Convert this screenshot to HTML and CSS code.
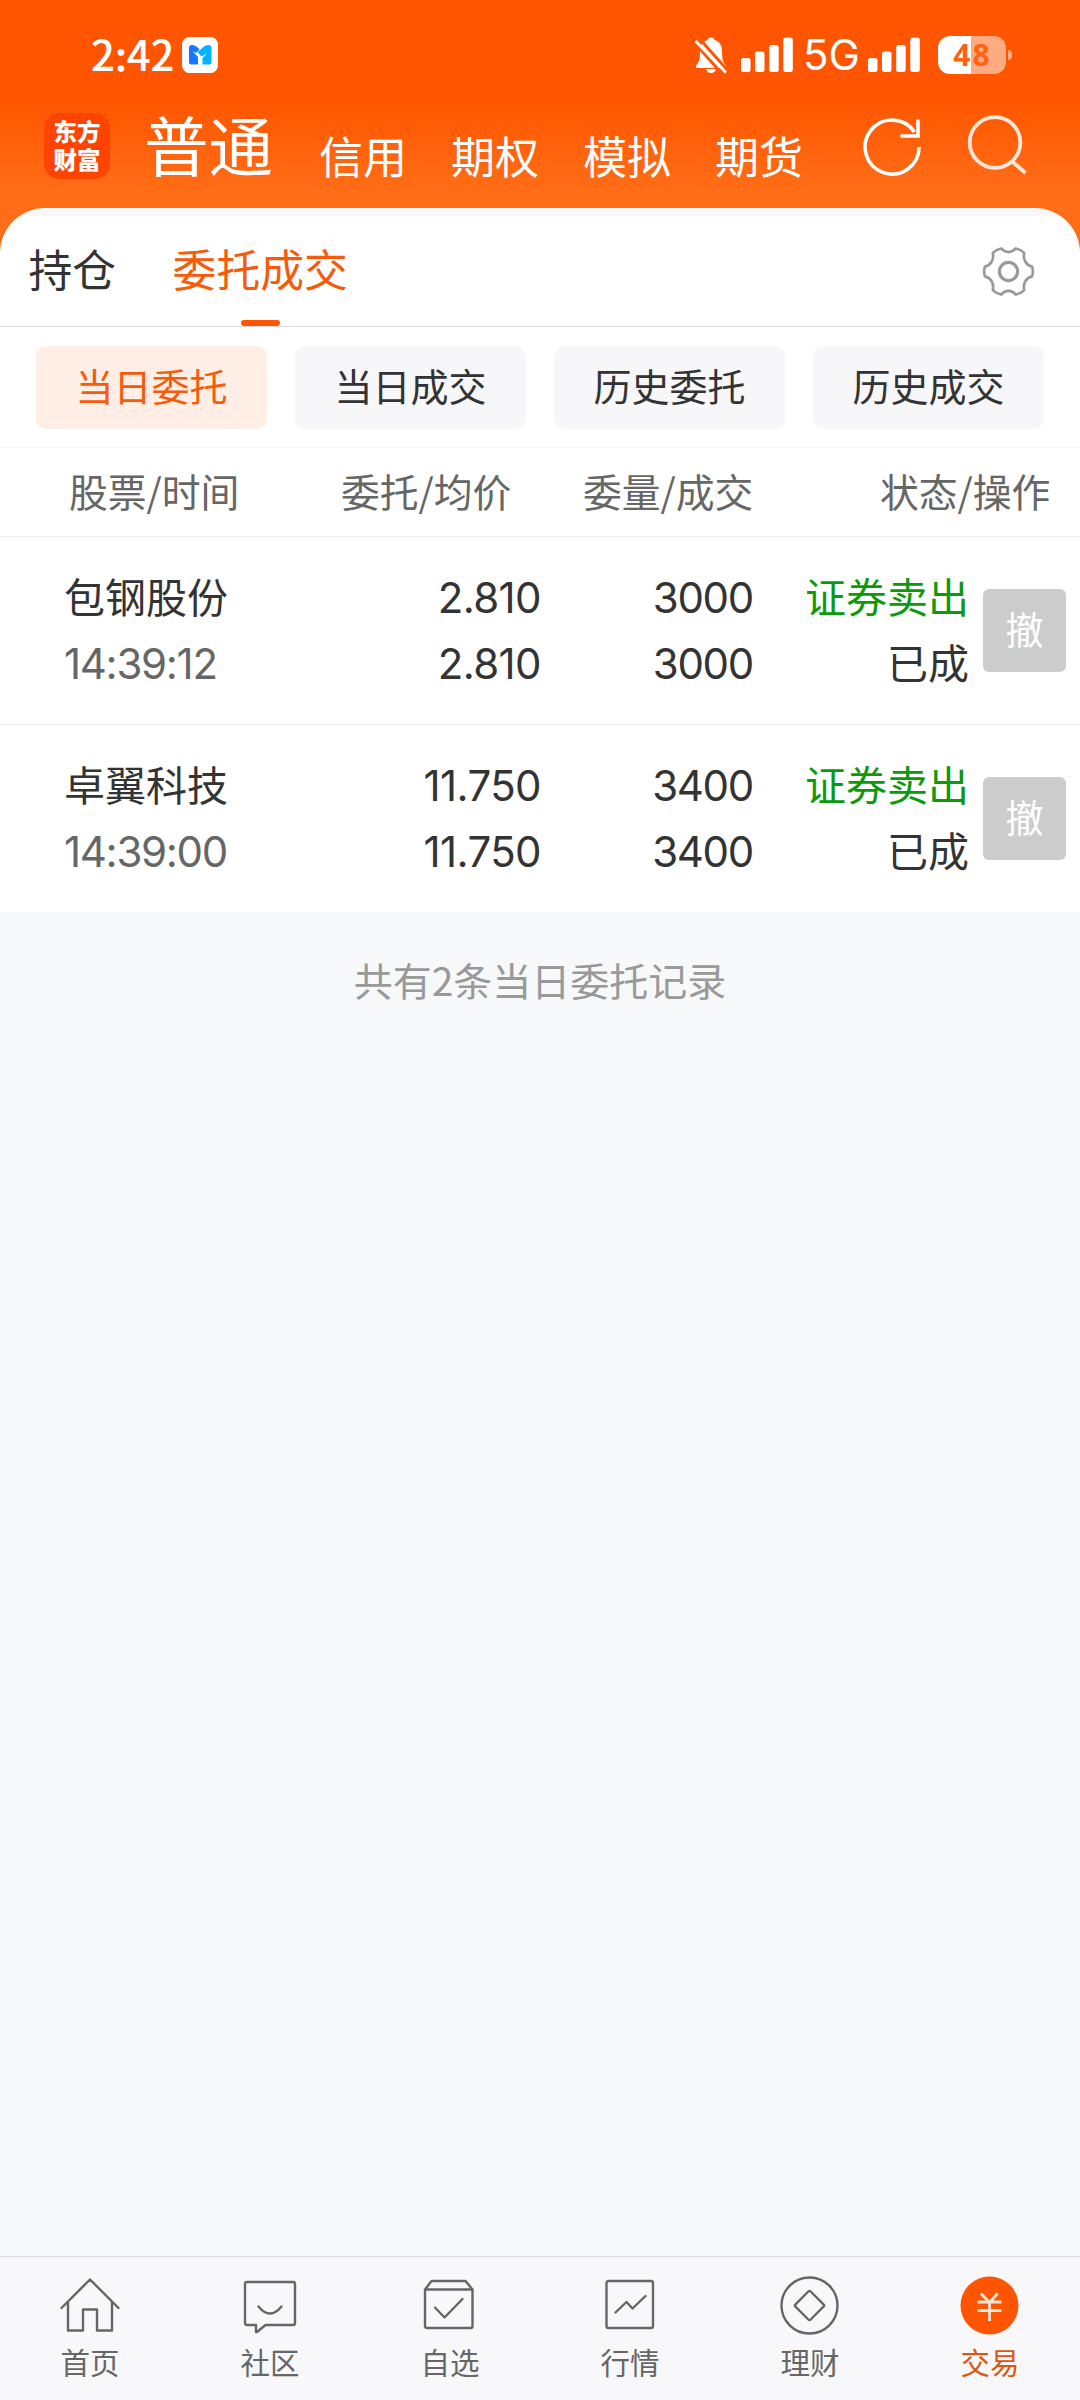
FILE: index.html
```html
<!DOCTYPE html>
<html lang="zh-CN">
<head>
<meta charset="utf-8">
<title>委托成交</title>
<link rel="stylesheet" href="styles.css">
</head>
<body>
<div class="app">
  <header class="header">
    <div class="status">
      <span class="clock">2:42</span>
      <svg class="app-badge" width="36" height="36" viewBox="0 0 36 36">
        <rect width="36" height="36" rx="7.5" fill="#fff"/>
        <path d="M7 11q0-3 3-3 4 0 7.500 4.500l-3.500 3.500-3.500-2 5.500 6v7.500H9.500q-2.500 0-2.500-2.500z" fill="#1677ff"/>
        <path d="M15.500 15 22 9.500q1.500-1.500 4-1.500 3.500 0 3.500 2.500v14.500q0 2.500-2.500 2.500h-6.500v-6.500l4.500-4.500-5.500 3z" fill="#06b4fd"/>
      </svg>
      <span class="spacer"></span>
      <svg class="bell" width="34" height="38" viewBox="0 0 34 38">
        <path d="M17 1.500c2 0 3 1 3.500 2.500 5.500 1.500 7.500 6 7.500 11 0 8 1 12 4 14.500v2.500H2v-2.500c3-2.500 4-6.500 4-14.500 0-5 2-9.500 7.500-11 .5-1.500 1.500-2.500 3.500-2.500zM12 33h10q-1 4-5 4t-5-4z" fill="#fff"/>
        <path d="M-1 5 30 40M4 1 36 37" stroke="#ff5500" stroke-width="3"/>
        <path d="M1.500 5 32 36.500" stroke="#fff" stroke-width="2.800"/>
      </svg>
      <svg class="signal" width="52" height="36" viewBox="0 0 52 36" fill="#fff">
        <rect y="21" width="9.500" height="14" rx="2.500"/><rect x="14" y="14.500" width="9.500" height="20.500" rx="2.500"/><rect x="28.200" y="8" width="9.500" height="27" rx="2.500"/><rect x="42.300" y="0.500" width="9.500" height="34.500" rx="2.500"/>
      </svg>
      <span class="net">5G</span>
      <svg class="signal" width="52" height="36" viewBox="0 0 52 36" fill="#fff">
        <rect y="21" width="9.500" height="14" rx="2.500"/><rect x="14" y="14.500" width="9.500" height="20.500" rx="2.500"/><rect x="28.200" y="8" width="9.500" height="27" rx="2.500"/><rect x="42.300" y="0.500" width="9.500" height="34.500" rx="2.500"/>
      </svg>
      <span class="battery">48</span>
      <span class="battery-tip"></span>
    </div>
    <div class="topnav">
      <div class="logo"><span>东方</span><span>财富</span></div>
      <h1 class="account">普通</h1>
      <nav class="accounts"><span>信用</span><span>期权</span><span>模拟</span><span>期货</span></nav>
      <svg class="refresh" width="62" height="62" viewBox="0 0 62 62" fill="none" stroke="#fff" stroke-width="3.600">
        <path d="M58.100 32A27 27 0 1 1 53.500 17M57 4.500V21H39.500"/>
      </svg>
      <svg class="search" width="62" height="62" viewBox="0 0 62 62" fill="none" stroke="#ffe6d8" stroke-width="3.800">
        <circle cx="28" cy="27.500" r="25.300"/><path d="M44.500 46 58.500 58"/>
      </svg>
    </div>
  </header>

  <main class="panel">
    <div class="tabs">
      <span class="tab">持仓</span>
      <span class="tab tab-on">委托成交</span>
      <svg class="gear" width="53" height="53" viewBox="0 0 54 54" fill="none" stroke="#999" stroke-width="2.700" stroke-linejoin="round">
        <path d="M19.500 3.500C17 4 13 6 11 8 12.500 15 9 20.500 3 22 2 25 2 29 3 32 9 33.500 12.500 39 11 46 13 48 17 50 19.500 50.500 24 45.500 30 45.500 34.500 50.500 37 50 41 48 43 46 41.500 39 45 33.500 51 32 52 29 52 25 51 22 45 20.500 41.500 15 43 8 41 6 37 4 34.500 3.500 30 8.500 24 8.500 19.500 3.500Z"/>
        <circle cx="27" cy="27" r="9.300" stroke-width="3.200"/>
      </svg>
    </div>
    <div class="filters">
      <span class="filter filter-on">当日委托</span>
      <span class="filter">当日成交</span>
      <span class="filter">历史委托</span>
      <span class="filter">历史成交</span>
    </div>
    <div class="grid head">
      <span>股票/时间</span><span>委托/均价</span><span>委量/成交</span><span class="head-last">状态/操作</span>
    </div>
    <div class="grid row">
      <div class="stock"><div class="name">包钢股份</div><div class="num time">14:39:12</div></div>
      <div class="num price">2.810<br>2.810</div>
      <div class="num">3000<br>3000</div>
      <div class="state"><span class="sell">证券卖出</span><br>已成</div>
      <span class="cancel">撤</span>
    </div>
    <div class="grid row">
      <div class="stock"><div class="name">卓翼科技</div><div class="num time">14:39:00</div></div>
      <div class="num price">11.750<br>11.750</div>
      <div class="num">3400<br>3400</div>
      <div class="state"><span class="sell">证券卖出</span><br>已成</div>
      <span class="cancel">撤</span>
    </div>
  </main>
  <p class="summary">共有2条当日委托记录</p>

  <footer class="tabbar">
    <div class="item">
      <svg width="60" height="60" viewBox="0 0 60 60"><path d="M1.500 32 30 3.500 58.500 32M8 26V54.500H23V33.500H37V54.500H52V26"/></svg>
      <span>首页</span>
    </div>
    <div class="item">
      <svg width="60" height="60" viewBox="0 0 60 60"><path d="M7 6H53Q55 6 55 8V47Q55 49 53 49H25.500L17 56H16V49H7Q5 49 5 47V8Q5 6 7 6Z"/><path d="M18.500 30.500Q30 44.500 41.500 30.500"/></svg>
      <span>社区</span>
    </div>
    <div class="item">
      <svg width="60" height="60" viewBox="0 0 60 60"><path d="M5 13.500 11.500 5H45.500L52.500 13.500V50Q52.500 52 50.500 52H7Q5 52 5 50ZM5 13.500H52.500M15 31.500 24.500 41.500 42.500 23"/></svg>
      <span>自选</span>
    </div>
    <div class="item">
      <svg width="60" height="60" viewBox="0 0 60 60"><rect x="6.500" y="5" width="46.500" height="47" rx="2"/><path d="M15.500 36.500 26.500 26 32.500 32.500 45.500 20"/></svg>
      <span>行情</span>
    </div>
    <div class="item">
      <svg width="60" height="60" viewBox="0 0 60 60"><circle cx="29.500" cy="29.500" r="28"/><path d="M28.300 15.500Q29.500 14.300 30.700 15.500L43.500 28.300Q44.700 29.500 43.500 30.700L30.700 43.500Q29.500 44.700 28.300 43.500L15.500 30.700Q14.300 29.500 15.500 28.300Z"/></svg>
      <span>理财</span>
    </div>
    <div class="item item-on">
      <svg width="60" height="60" viewBox="0 0 60 60"><circle class="disc" cx="29.500" cy="29.500" r="29"/><path class="yen" d="M21 17.500 29.500 26.500 37.500 17.500M29.500 26V45M17.500 26H41.500M17.500 34.500H41.500"/></svg>
      <span>交易</span>
    </div>
  </footer>
</div>
</body>
</html>
```
FILE: styles.css
```css
* { box-sizing: border-box; }
body {
  margin: 0;
  font-family: "Noto Sans CJK SC", sans-serif;
  color: #333;
}
.app {
  width: 1080px;
  height: 2400px;
  display: flex;
  flex-direction: column;
  background: linear-gradient(#ff5500 0, #ff5500 98px, #ff6d16 190px, #ff6d16 300px, #f7f8fa 300px);
}
.header { height: 208px; color: #fff; }

.status { height: 108px; padding: 2px 68px 0 91px; display: flex; align-items: center; }
.clock { width: 91px; font-size: 42px; font-weight: 500; line-height: 50px; letter-spacing: -0.300px; margin-top: -5px; }
.spacer { flex: 1; }
.bell { margin: 0 13px 0 0; }
.net { font: 42px/50px Inter, sans-serif; width: 74.5px; padding-left: 10px; }
.battery {
  margin-left: 18.500px;
  width: 68px;
  height: 38px;
  border-radius: 12px;
  background: linear-gradient(90deg, #fff 33px, #ffab82 33px);
  color: #ff6210;
  font: 700 30px/38px "Noto Sans", sans-serif;
  letter-spacing: 2px;
  padding-left: 1px;
  text-align: center;
}
.battery-tip { width: 4px; height: 10px; margin-left: 2px; border-radius: 0 5px 5px 0; background: #ffab82; }

.topnav { height: 100px; padding: 0 20px 0 44px; display: flex; align-items: flex-start; }
.logo {
  width: 66px;
  height: 66px;
  margin-top: 5px;
  padding-top: 4px;
  border-radius: 15px;
  background: #ff4400;
  display: flex;
  flex-direction: column;
  align-items: center;
  font-size: 23.500px;
  font-weight: 900;
  line-height: 28px;
}
.account { margin: 0 0 0 34px; width: 130px; font-size: 64.500px; font-weight: 400; line-height: 70px; }
.accounts { display: flex; gap: 44px; margin: 23px 0 0 45px; font-size: 44px; line-height: 48px; }
.refresh { margin: 7px 0 0 58px; }
.search { margin: 7px 0 0 44px; }

.panel {
  border-radius: 45px 45px 0 0;
  overflow: hidden;
  background: linear-gradient(#f7f7fa 8px, #fff 8px);
  height: 704px;
}
.tabs { height: 119px; padding: 8px 45px 0 28.500px; display: flex; align-items: center; border-bottom: 1px solid #ddd; font-size: 43.800px; }
.tab { line-height: 110px; height: 110px; margin-right: 56.500px; margin-top: -6px; position: relative; }
.tab-on { color: #f95a0a; margin-right: auto; }
.tab-on::after {
  content: "";
  position: absolute;
  left: 68px;
  bottom: -3px;
  width: 39px;
  height: 6px;
  border-radius: 3px;
  background: #ff5500;
}
.filters { height: 121px; padding: 19px 36px 0; display: grid; grid-template-columns: repeat(4, 231px); gap: 28px; border-bottom: 1px solid #f5f5f6; }
.filter { height: 83px; border-radius: 10px; background: #f7f7fa; text-align: center; font-size: 38px; line-height: 77px; }
.filter-on { background: #ffeee6; color: #f95a0a; }

.grid { display: grid; }
.head {
  height: 89px;
  grid-template-columns: 272px 242px 297px 1fr;
  padding-left: 69px;
  border-bottom: 1px solid #ebebeb;
  color: #666;
  font-size: 38.800px;
  line-height: 84px;
}
.row {
  height: 188px;
  padding: 25px 14px 0 64px;
  grid-template-columns: 220px 257px 212px 216px 83px;
  column-gap: 0;
  font-size: 41px;
  line-height: 66px;
  border-bottom: 1px solid #ebebeb;
}
.row:last-child { border: 0; }
.name { height: 69px; }
.num { font-family: Inter, sans-serif; font-size: 42px; letter-spacing: -1.300px; text-align: right; padding-top: 3px; }
.price { letter-spacing: -0.600px; }
.time { color: #666; text-align: left; padding: 0; letter-spacing: -1.300px; }
.state { text-align: right; }
.sell { color: #0a9a0a; }
.cancel { margin: 27px -14px 0 14px; height: 83px; border-radius: 6px; background: #ccc; color: #fff; font-size: 38px; line-height: 77px; text-align: center; }

.summary { margin: 0; padding-top: 37px; flex: 1; text-align: center; color: #999; font-size: 39px; line-height: 60px; }

.tabbar { height: 144px; border-top: 1px solid #ddd; background: #f8f8fa; display: grid; grid-template-columns: repeat(6, 1fr); }
.item { display: flex; flex-direction: column; align-items: center; padding-top: 19px; color: #666; font-size: 29.500px; line-height: 40px; }
.item svg { fill: none; stroke: #666; stroke-width: 2.400; stroke-linejoin: round; stroke-linecap: round; margin-bottom: 5px; }
.item-on { color: #df5410; }
.item .disc { fill: #ff5500; stroke: none; }
.item .yen { stroke: #ffe6da; stroke-width: 2.800; stroke-linecap: butt; }
```
